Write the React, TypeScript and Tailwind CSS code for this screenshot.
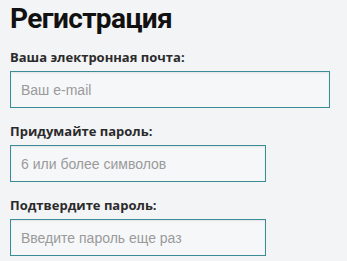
export default function App() {
  const fields = [
    { label: "Ваша электронная почта:", placeholder: "Ваш e-mail", type: "email", width: "w-[320px]" },
    { label: "Придумайте пароль:", placeholder: "6 или более символов", type: "password", width: "w-[256px]" },
    { label: "Подтвердите пароль:", placeholder: "Введите пароль еще раз", type: "password", width: "w-[256px]" },
  ];

  return (
    <div className="min-h-screen bg-[#f3f4f6] px-[10px] pt-[1px] font-['Open_Sans',sans-serif] text-[#222]">
      <h1 className="font-['Roboto',sans-serif] text-[28px] leading-[36px] font-bold tracking-[-0.6px] text-[#111]">
        Регистрация
      </h1>
      <form className="mt-[11px] flex flex-col">
        {fields.map((f, i) => (
          <div key={f.label} className={i > 0 ? "mt-[14px]" : ""}>
            <label className="block text-[13px] leading-[18px] font-bold text-[#2b2b2b]">{f.label}</label>
            <input
              type={f.type}
              placeholder={f.placeholder}
              className={`mt-[5px] h-[37px] ${f.width} border border-[#3b8c96] bg-[#f6f7f9] px-[10px] font-['Liberation_Sans',sans-serif] text-[14px] text-[#333] placeholder:text-[#9a9a9a] shadow-[inset_0_1px_2px_rgba(0,0,0,0.08)] outline-none`}
            />
          </div>
        ))}
      </form>
    </div>
  );
}
